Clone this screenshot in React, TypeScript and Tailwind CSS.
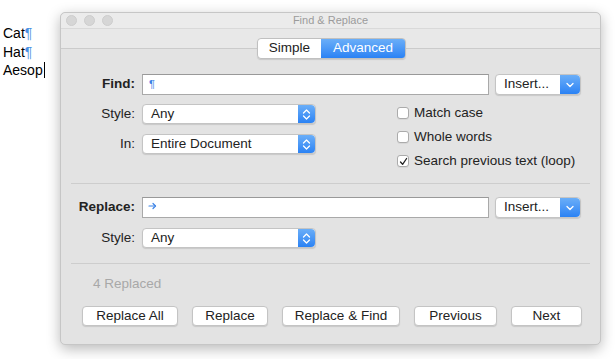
const font = { fontFamily: '"Liberation Sans", Arial, sans-serif' };

const Stepper = () => (
  <div className="flex h-full w-[17px] flex-col items-center justify-center rounded-r-[4px] bg-gradient-to-b from-[#6aaef8] to-[#2a82f4]">
    <svg width="9" height="13" viewBox="0 0 9 13" fill="none" stroke="white" strokeWidth="1.3" strokeLinecap="round" strokeLinejoin="round">
      <path d="M1.5 5 L4.5 2 L7.5 5" />
      <path d="M1.5 8 L4.5 11 L7.5 8" />
    </svg>
  </div>
);

const Popup = ({ value }: { value: string }) => (
  <div className="flex h-[20px] w-[174px] items-center rounded-[4px] border border-[#c4c4c4] bg-white shadow-[0_1px_1px_rgba(0,0,0,0.12)]">
    <span className="flex-1 pl-[8px] text-[13.5px] text-[#222]">{value}</span>
    <Stepper />
  </div>
);

const InsertButton = () => (
  <div className="flex h-[21px] w-[86px] items-center rounded-[4px] border border-[#c4c4c4] bg-white shadow-[0_1px_1px_rgba(0,0,0,0.12)]">
    <span className="flex-1 pl-[8px] text-[13.5px] text-[#222]">Insert...</span>
    <div className="flex h-full w-[20px] items-center justify-center rounded-r-[4px] bg-gradient-to-b from-[#6aaef8] to-[#2a82f4]">
      <svg width="8" height="6" viewBox="0 0 8 6" fill="none" stroke="white" strokeWidth="1.3" strokeLinecap="round" strokeLinejoin="round">
        <path d="M1 1.5 L4 4.5 L7 1.5" />
      </svg>
    </div>
  </div>
);

const Field = ({ children }: { children?: React.ReactNode }) => (
  <div className="flex h-[21px] w-[347px] items-center border border-[#a9a9a9] border-t-[#999] bg-white pl-[6px]">
    {children}
  </div>
);

const Check = ({ label, checked }: { label: string; checked?: boolean }) => (
  <div className="flex h-[20px] items-center gap-[5px]">
    <div className="flex h-[12px] w-[12px] items-center justify-center rounded-[3px] border border-[#ababab] bg-white shadow-[0_1px_0_rgba(0,0,0,0.05)]">
      {checked && (
        <svg width="9" height="9" viewBox="0 0 9 9" fill="none" stroke="#222" strokeWidth="1.3" strokeLinecap="round" strokeLinejoin="round">
          <path d="M1.5 5 L3.6 7.3 L7.6 1.5" />
        </svg>
      )}
    </div>
    <span className="text-[13.5px] text-[#222]">{label}</span>
  </div>
);

const Btn = ({ label, w }: { label: string; w: string }) => (
  <div className={`flex h-[20px] items-center justify-center rounded-[4px] border border-[#c4c4c4] bg-white text-[13.5px] text-[#222] shadow-[0_1px_1px_rgba(0,0,0,0.12)] ${w}`}>
    {label}
  </div>
);

const Label = ({ text, bold }: { text: string; bold?: boolean }) => (
  <span className={`w-[74px] text-right text-[13.5px] text-[#222] ${bold ? 'font-bold' : ''}`}>{text}</span>
);

export default function App() {
  return (
    <div className="flex h-[359px] w-[615px] overflow-hidden bg-white" style={font}>
      <div className="w-[60px] pl-[3px] pt-[24px] text-[14px] leading-[18.5px] text-black">
        <div>Cat<span className="text-[#4a90e2]">¶</span></div>
        <div>Hat<span className="text-[#4a90e2]">¶</span></div>
        <div className="flex items-center">Aesop<span className="ml-px inline-block h-[16px] w-px bg-black" /></div>
      </div>

      <div className="mt-[12px] flex h-[333px] w-[541px] flex-col rounded-[5px] border border-[#c6c6c6] bg-[#e3e3e3] shadow-[0_4px_14px_rgba(0,0,0,0.28)]">
        {/* title bar */}
        <div className="relative flex h-[16px] items-center rounded-t-[5px] border-b border-[#d9d9d9] bg-[#ebebeb] pl-[5px]">
          <div className="flex gap-[7px]">
            <div className="h-[11px] w-[11px] rounded-full border border-[#cdcdcd] bg-[#d6d6d6]" />
            <div className="h-[11px] w-[11px] rounded-full border border-[#cdcdcd] bg-[#d6d6d6]" />
            <div className="h-[11px] w-[11px] rounded-full border border-[#cdcdcd] bg-[#d6d6d6]" />
          </div>
          <span className="absolute inset-x-0 text-center text-[11px] text-[#9b9b9b]">Find &amp; Replace</span>
        </div>

        {/* toolbar with tabs */}
        <div className="flex h-[20px] justify-center border-b border-[#cbcbcb] bg-[#e8e8e8] pt-[9px]">
          <div className="relative z-10 ml-[2px] flex h-[21px] rounded-[4px] border border-[#c0c0c0] shadow-[0_1px_1px_rgba(0,0,0,0.12)]">
            <div className="flex w-[63px] items-center justify-center rounded-l-[4px] bg-white text-[13.5px] text-[#222]">Simple</div>
            <div className="flex w-[84px] items-center justify-center rounded-r-[3px] bg-gradient-to-b from-[#6aaef8] to-[#2a82f4] text-[13.5px] text-white">Advanced</div>
          </div>
        </div>

        {/* find section */}
        <div className="flex flex-col pt-[25px]">
          <div className="flex items-center">
            <Label text="Find:" bold />
            <div className="ml-[7px] flex items-center gap-[6px]">
              <Field>
                <span className="text-[11px] text-[#3b82e6]">¶</span>
              </Field>
              <InsertButton />
            </div>
          </div>

          <div className="mt-[9px] flex items-start">
            <div className="flex flex-col gap-[10px]">
              <div className="flex items-center">
                <Label text="Style:" />
                <div className="ml-[7px]"><Popup value="Any" /></div>
              </div>
              <div className="flex items-center">
                <Label text="In:" />
                <div className="ml-[7px]"><Popup value="Entire Document" /></div>
              </div>
            </div>
            <div className="-mt-px ml-[81px] flex flex-col gap-[4px]">
              <Check label="Match case" />
              <Check label="Whole words" />
              <Check label="Search previous text (loop)" checked />
            </div>
          </div>
        </div>

        <div className="mx-[10px] mt-[12px] h-px bg-[#cdcdcd]" />

        {/* replace section */}
        <div className="flex flex-col pt-[13px]">
          <div className="flex items-center">
            <Label text="Replace:" bold />
            <div className="ml-[7px] flex items-center gap-[6px]">
              <Field>
                <svg width="9" height="8" viewBox="0 0 9 8" fill="none" stroke="#3b82e6" strokeWidth="1.2" strokeLinecap="round" strokeLinejoin="round" className="-mt-[4px] ml-[-1px]">
                  <path d="M1 4 H7.5" />
                  <path d="M5 1.5 L7.5 4 L5 6.5" />
                </svg>
              </Field>
              <InsertButton />
            </div>
          </div>
          <div className="mt-[10px] flex items-center">
            <Label text="Style:" />
            <div className="ml-[7px]"><Popup value="Any" /></div>
          </div>
        </div>

        <div className="mx-[10px] mt-[15px] h-px bg-[#cdcdcd]" />

        <div className="pl-[32px] pt-[12px] text-[13.5px] leading-[16px] text-[#a8a8a8]">4 Replaced</div>

        <div className="flex gap-[14px] pl-[21px] pt-[14px]">
          <Btn label="Replace All" w="w-[96px]" />
          <Btn label="Replace" w="w-[76px]" />
          <Btn label="Replace & Find" w="w-[118px]" />
          <Btn label="Previous" w="w-[83px]" />
          <Btn label="Next" w="w-[71px]" />
        </div>
      </div>
    </div>
  );
}
